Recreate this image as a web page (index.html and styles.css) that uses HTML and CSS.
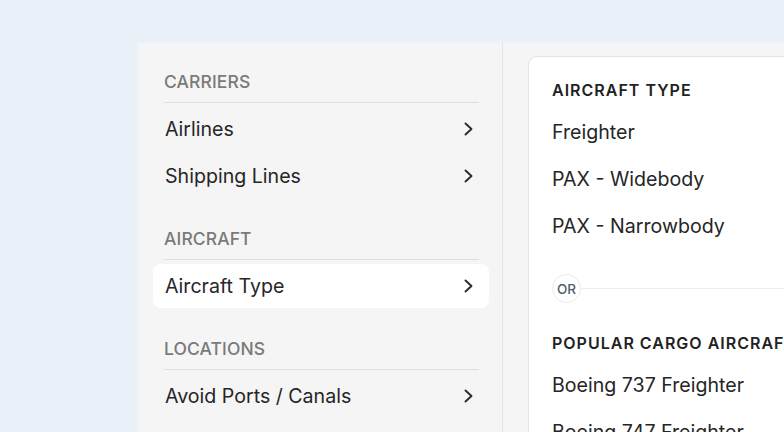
FILE: index.html
```html
<!DOCTYPE html>
<html lang="en">
<head>
<meta charset="utf-8">
<title>Filters</title>
<link rel="stylesheet" href="styles.css">
</head>
<body>
<div class="panel">
  <nav class="sidebar">
    <section class="group">
      <h3 class="group-title">Carriers</h3>
      <ul class="menu">
        <li class="menu-item"><span>Airlines</span><svg class="chev" viewBox="0 0 9 14"><path d="M1.5 1.5l6 5.5-6 5.5"/></svg></li>
        <li class="menu-item"><span>Shipping Lines</span><svg class="chev" viewBox="0 0 9 14"><path d="M1.5 1.5l6 5.5-6 5.5"/></svg></li>
      </ul>
    </section>
    <section class="group">
      <h3 class="group-title">Aircraft</h3>
      <ul class="menu">
        <li class="menu-item active"><span>Aircraft Type</span><svg class="chev" viewBox="0 0 9 14"><path d="M1.5 1.5l6 5.5-6 5.5"/></svg></li>
      </ul>
    </section>
    <section class="group">
      <h3 class="group-title">Locations</h3>
      <ul class="menu">
        <li class="menu-item"><span>Avoid Ports / Canals</span><svg class="chev" viewBox="0 0 9 14"><path d="M1.5 1.5l6 5.5-6 5.5"/></svg></li>
      </ul>
    </section>
  </nav>
  <main class="content">
    <div class="card">
      <h4 class="card-title">Aircraft Type</h4>
      <ul class="options">
        <li>Freighter</li>
        <li>PAX - Widebody</li>
        <li>PAX - Narrowbody</li>
      </ul>
      <div class="or-divider"><span class="or-badge">OR</span><span class="or-line"></span></div>
      <h4 class="card-title second">Popular Cargo Aircraft</h4>
      <ul class="options">
        <li>Boeing 737 Freighter</li>
        <li>Boeing 747 Freighter</li>
      </ul>
    </div>
  </main>
</div>
</body>
</html>
```

FILE: styles.css
```css
html, body {
  margin: 0;
  padding: 0;
  overflow: hidden;
  height: 100%;
}
body {
  background: #eaf1f8;
  font-family: Inter, "Noto Sans", "Liberation Sans", sans-serif;
  color: #262626;
  padding: 43px 0 0 138px;
  box-sizing: border-box;
}
.panel {
  display: flex;
  width: 760px;
  height: 480px;
  background: #f5f5f5;
}
.sidebar {
  width: 365px;
  flex: none;
  box-sizing: border-box;
  border-right: 1px solid #e2e2e2;
  padding: 28px 13px 0 15px;
}
.group + .group {
  margin-top: 30px;
}
.group-title {
  margin: 0 10px 0 11px;
  padding-bottom: 9px;
  border-bottom: 1px solid #e0e0e0;
  font-size: 17.5px;
  line-height: 22px;
  font-weight: 500;
  color: #7a7a7a;
  text-transform: uppercase;
  letter-spacing: 0.1px;
}
.menu {
  list-style: none;
  margin: 4px 0 0;
  padding: 0;
  display: flex;
  flex-direction: column;
  gap: 3px;
}
.menu-item {
  height: 44px;
  display: flex;
  align-items: center;
  justify-content: space-between;
  padding: 0 16px 0 12px;
  border-radius: 8px;
  font-size: 19.6px;
  color: #262626;
}
.menu-item.active {
  background: #ffffff;
}
.chev {
  width: 9px;
  height: 14px;
  fill: none;
  stroke: #2a2a2a;
  stroke-width: 1.9;
  stroke-linecap: round;
  stroke-linejoin: round;
}
.content {
  flex: 1;
  padding: 13px 0 0 25px;
}
.card {
  background: #ffffff;
  border: 1px solid #e4e4e4;
  border-radius: 9px;
  padding: 22px 24px 0 23px;
  height: 500px;
}
.card-title {
  margin: 0 0 8px;
  font-size: 16px;
  line-height: 22px;
  font-weight: 600;
  color: #222;
  text-transform: uppercase;
  letter-spacing: 1px;
  white-space: nowrap;
}
.card-title.second {
  margin-top: 29px;
}
.options {
  list-style: none;
  margin: 0;
  padding: 0;
}
.options li {
  height: 47px;
  line-height: 47px;
  font-size: 19.6px;
  color: #262626;
  white-space: nowrap;
}
.or-divider {
  display: flex;
  align-items: center;
  margin-top: 24px;
}
.or-badge {
  width: 27px;
  height: 27px;
  flex: none;
  border: 1px solid #ebebeb;
  border-radius: 50%;
  display: flex;
  align-items: center;
  justify-content: center;
  font-size: 13.5px;
  color: #555d66;
  font-weight: 500;
}
.or-line {
  flex: 1;
  height: 1px;
  background: #ededed;
}
```
